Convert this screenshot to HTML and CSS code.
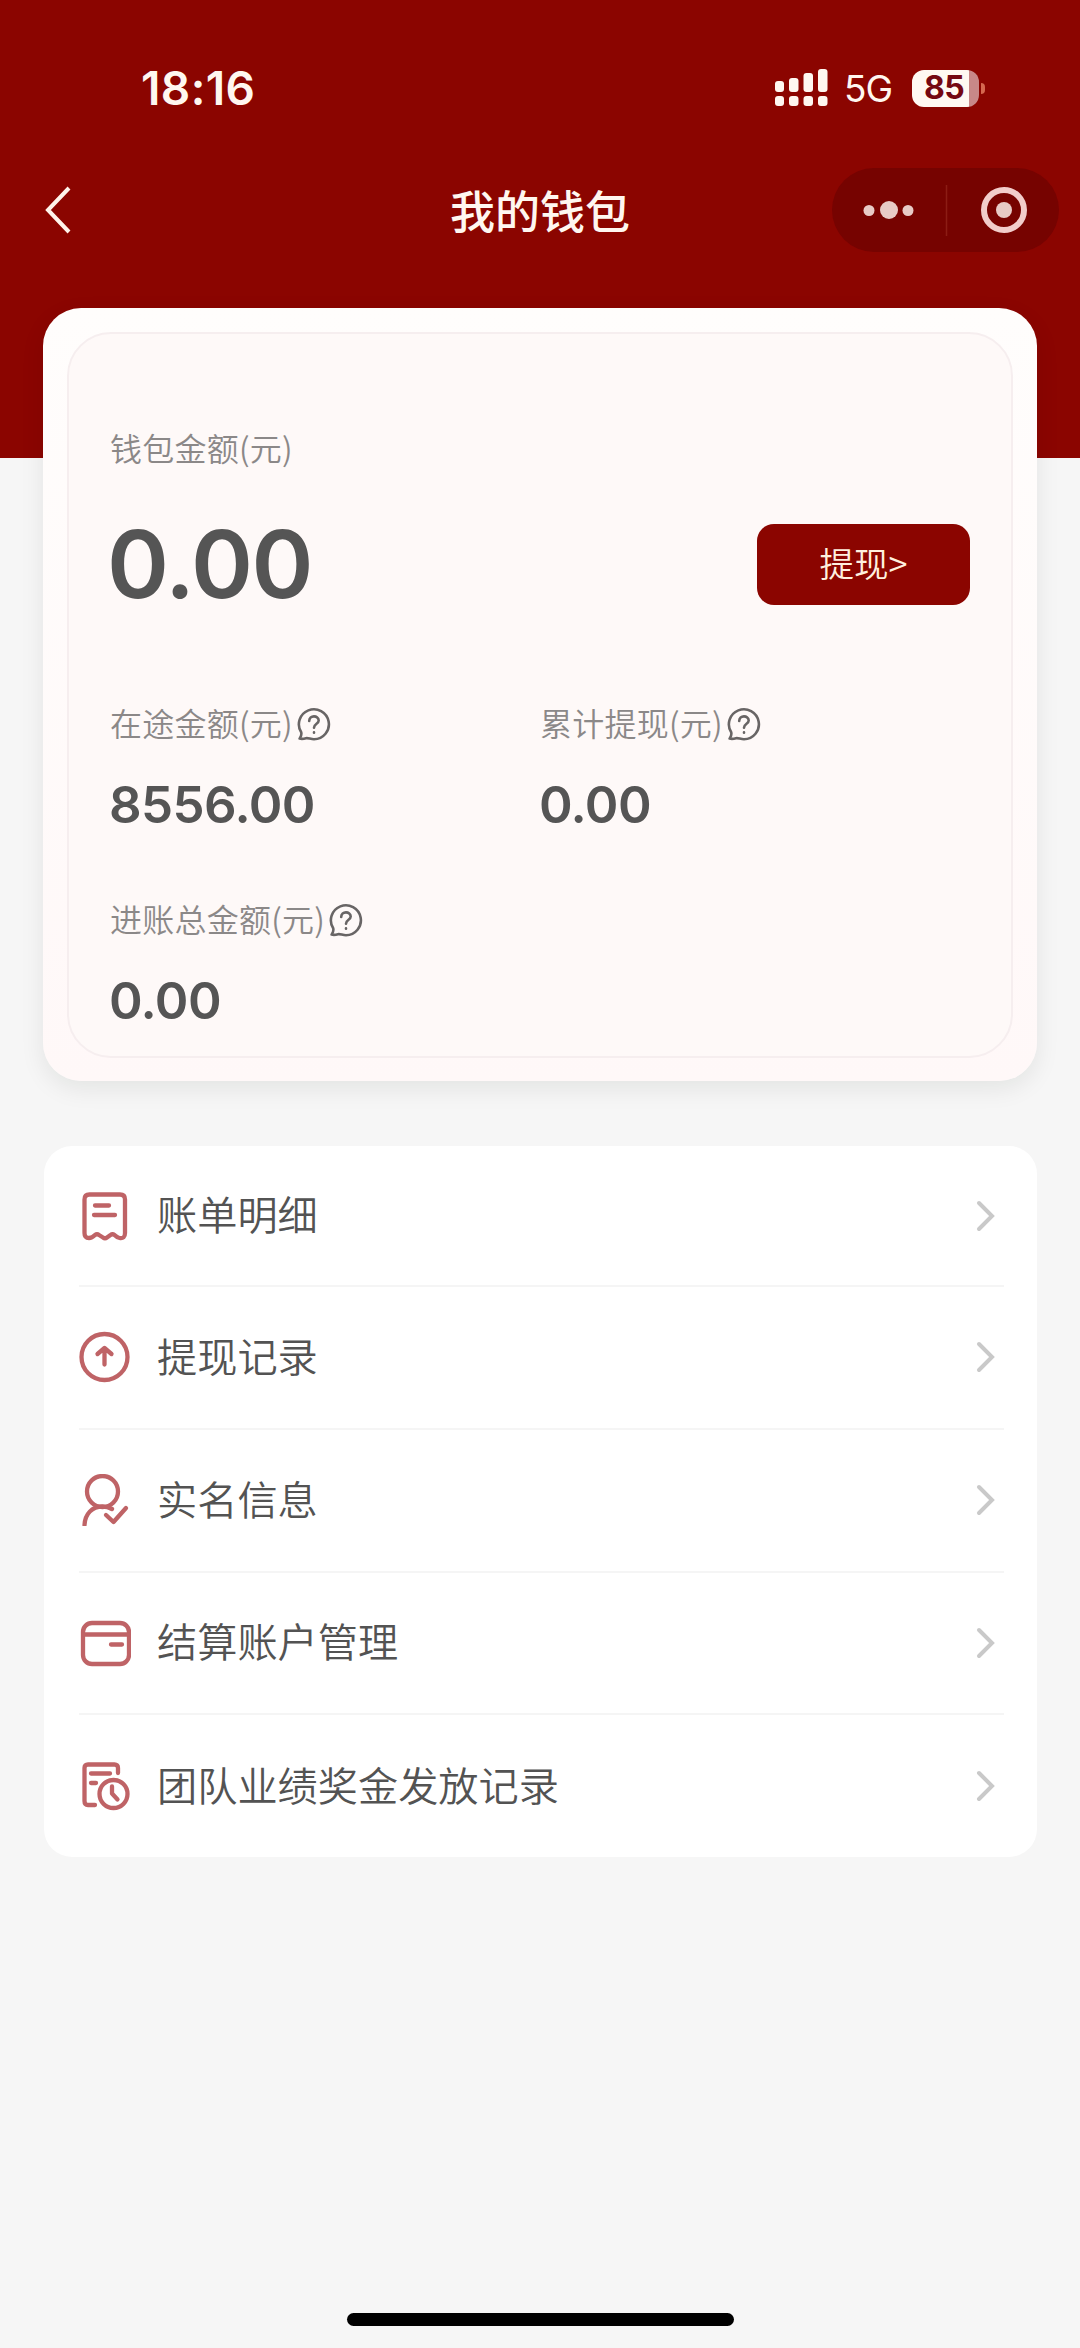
FILE: index.html
```html
<!DOCTYPE html>
<html lang="zh-CN">
<head>
<meta charset="utf-8">
<title>我的钱包</title>
<link rel="stylesheet" href="styles.css">
</head>
<body>
<svg class="defs" width="0" height="0">
  <symbol id="help" viewBox="0 0 34 34"><path d="M4.2 25.3A15 15 0 1 1 17 32.3C13.6 32.3 11 30.6 9 31.2C7 31.8 5 32.2 2.6 31.6C3.6 29.8 5 28 4.2 25.3Z"/><path d="M12.2 14C12.2 7.8 21.7 8 21.7 13.6C21.7 17 17 16.6 17 20.8M17 25.4V25.8"/></symbol>
  <symbol id="chevron" viewBox="0 0 20 32"><path d="M3 3L16 16L3 29"/></symbol>
</svg>
<div class="screen">
  <header class="header">
    <div class="status">
      <span class="time">18:16</span>
      <div class="indicators">
        <svg class="signal" width="53" height="38" viewBox="0 0 53 38"><rect x="0" y="12" width="9" height="11" rx="3"/><rect x="14" y="9" width="9.500" height="14" rx="3"/><rect x="28.500" y="4" width="9.500" height="19" rx="3"/><rect x="43" y="0" width="9.500" height="23" rx="3"/><rect x="0" y="27" width="9" height="10" rx="3"/><rect x="14" y="27" width="9.500" height="10" rx="3"/><rect x="28.500" y="27" width="9.500" height="10" rx="3"/><rect x="43" y="27" width="9.500" height="10" rx="3"/></svg>
        <span class="network">5G</span>
        <div class="battery"><span class="level">85</span></div>
        <i class="nub"></i>
      </div>
    </div>
    <nav class="nav">
      <svg class="back" width="30" height="48" viewBox="0 0 30 48"><path d="M26 2L5 24L26 46"/></svg>
      <h1 class="title">我的钱包</h1>
      <div class="capsule">
        <svg width="227" height="84" viewBox="0 0 227 84"><circle cx="37" cy="42.500" r="5.500"/><circle cx="57" cy="42" r="9"/><circle cx="76" cy="42.500" r="5.500"/><path class="split" d="M114.500 17V68"/><circle class="ring" cx="172" cy="42" r="20"/><circle cx="172" cy="42" r="8"/></svg>
      </div>
    </nav>
  </header>

  <main class="content">
    <section class="card">
      <div class="panel">
        <div class="label">钱包金额(元)</div>
        <div class="balance">
          <span class="amount">0.00</span>
          <button class="withdraw">提现&gt;</button>
        </div>
        <div class="stats">
          <div class="stat"><div class="label">在途金额(元)<svg class="help"><use href="#help"/></svg></div><div class="value">8556.00</div></div>
          <div class="stat"><div class="label">累计提现(元)<svg class="help"><use href="#help"/></svg></div><div class="value">0.00</div></div>
          <div class="stat"><div class="label">进账总金额(元)<svg class="help"><use href="#help"/></svg></div><div class="value">0.00</div></div>
        </div>
      </div>
    </section>

    <ul class="menu">
      <li class="item">
        <svg class="icon" viewBox="0 0 52 52"><path d="M5.500 9.500Q5.500 4.500 10.500 4.500H41Q46 4.500 46 9.500V43Q46 49 40.500 48Q38 47.500 35.500 45Q33.500 43.500 31.500 45L28 47.500Q26 49 24 47.500L20 45Q18 43.500 16 45Q13 48 10 48Q5.500 48 5.500 43Z"/><path d="M16 15.500H30M15 25H36"/></svg>
        <span class="name">账单明细</span><svg class="go"><use href="#chevron"/></svg>
      </li>
      <li class="item">
        <svg class="icon" viewBox="0 0 52 52"><circle cx="25.500" cy="26" r="23"/><path d="M25.500 33.500V18M18.500 23L25.500 17L32.500 23"/></svg>
        <span class="name">提现记录</span><svg class="go"><use href="#chevron"/></svg>
      </li>
      <li class="item">
        <svg class="icon" viewBox="0 0 52 52"><circle cx="23.500" cy="17.500" r="15.500"/><path d="M5.500 51C6 40 13 32.500 23.500 32.500Q28.500 32.500 33 35"/><path d="M27 41L34.500 48L47 34"/></svg>
        <span class="name">实名信息</span><svg class="go"><use href="#chevron"/></svg>
      </li>
      <li class="item">
        <svg class="icon" viewBox="0 0 52 52"><rect x="4" y="6" width="46" height="41" rx="9"/><path d="M5 17.500H49M32 27.500H43"/></svg>
        <span class="name">结算账户管理</span><svg class="go"><use href="#chevron"/></svg>
      </li>
      <li class="item">
        <svg class="icon" viewBox="0 0 52 52"><path d="M39 13V8Q39 4.500 35.500 4.500H9Q5.500 4.500 5.500 8V41Q5.500 45 9 45H16M12 13.500H31M12 23H17"/><circle cx="34.500" cy="34" r="14"/><path d="M33 26.500V33.500L38.500 39.500"/></svg>
        <span class="name">团队业绩奖金发放记录</span><svg class="go"><use href="#chevron"/></svg>
      </li>
    </ul>
  </main>
  <div class="home"></div>
</div>
</body>
</html>
```
FILE: styles.css
```css
* { box-sizing: border-box; }
body { margin: 0; background: #f6f6f6; font-family: Inter, "Noto Sans CJK SC", sans-serif; color: #555; }
svg { display: block; flex: none; }
.defs { position: absolute; }
.screen { height: 2348px; display: flex; flex-direction: column; overflow: hidden; }

.header { height: 458px; flex: none; background: #8b0500; padding-top: 58px; color: #fff7f0; }
.status { height: 60px; display: flex; align-items: center; justify-content: space-between; padding: 0 95px 0 141px; }
.time { font-size: 46px; font-weight: 600; letter-spacing: 0.4px; line-height: 58px; padding-bottom: 1px; }
.indicators { display: flex; align-items: center; }
.signal { fill: #fff7f0; }
.network { width: 84px; padding: 1px 0 0 16px; font-size: 37px; letter-spacing: -1px; white-space: nowrap; }
.battery { width: 67px; height: 37px; border-radius: 12px; background: linear-gradient(90deg, #fff9f2 57px, #c88888 57px); display: flex; align-items: center; padding-left: 12px; }
.level { color: #750812; font-size: 32px; font-weight: 700; line-height: 36px; padding-bottom: 1px; letter-spacing: -0.5px; }
.nub { width: 4px; height: 11px; margin-left: 2px; border-radius: 0 4px 4px 0; background: #d5684f; }
.nav { height: 84px; margin-top: 50px; padding: 0 21px 0 43px; display: grid; grid-template-columns: 227px 1fr 227px; align-items: center; }
.back { fill: none; stroke: #fff3ea; stroke-width: 4; }
.title { margin: 0 0 0 22px; padding-right: 44px; text-align: center; font-size: 45px; font-weight: 500; line-height: 60px; font-family: "Noto Sans CJK SC", sans-serif; }
.capsule { height: 84px; border-radius: 42px; background: #760300; }
.capsule svg { fill: #e8cbc6; }
.capsule .split { stroke: #8c1c14; stroke-width: 1.5; }
.capsule .ring { fill: none; stroke: #f2cdca; stroke-width: 6; }

.content { padding: 0 43px; margin-top: -150px; }
.card { height: 773px; padding: 24px; border-radius: 38px; background: linear-gradient(#fffdfc, #fff8f8); box-shadow: 0 8px 24px rgba(0, 20, 10, 0.08); }
.panel { height: 726px; border: 2px solid #f6eeef; border-radius: 44px; background: #fef9f8; padding: 89px 41px 0; }
.label { display: flex; align-items: center; height: 48px; font-family: "Noto Sans CJK SC", sans-serif; font-weight: 350; font-size: 32px; letter-spacing: 0.25px; color: #8b8888; white-space: nowrap; }
.help { width: 34px; height: 34px; margin: 3px 0 0 4px; fill: none; stroke: #686565; stroke-width: 2.6; stroke-linecap: round; stroke-linejoin: round; }
.balance { height: 82px; margin-top: 52px; display: flex; align-items: center; justify-content: space-between; }
.amount { margin-left: -3px; font-size: 94px; font-weight: 600; line-height: 82px; letter-spacing: -1.4px; }
.withdraw { width: 213px; height: 81px; padding: 0 0 4px; border: 0; border-radius: 17px; background: #8b0500; color: #fff0df; font-family: "Noto Sans CJK SC", sans-serif; font-size: 34.500px; font-weight: 350; }
.stats { margin-top: 93px; display: grid; grid-template-columns: 430px 1fr; row-gap: 50px; }
.stat { height: 146px; }
.value { margin: 29px 0 0 -1px; font-size: 51px; font-weight: 600; line-height: 60px; letter-spacing: -0.6px; }

.menu { list-style: none; margin: 65px 0 0 1px; padding: 0 33px 0 35px; background: #fff; border-radius: 28px; }
.item { height: 142.750px; display: flex; align-items: center; border-bottom: 2px solid #f5f5f5; }
.item:first-child { height: 141px; }
.item:last-child { height: 142px; border-bottom: 0; }
.icon { width: 52px; height: 52px; fill: none; stroke: #bf6366; stroke-width: 4.3; stroke-linecap: round; stroke-linejoin: round; }
.name { flex: 1; margin-left: 26px; padding-bottom: 5px; font-family: "Noto Sans CJK SC", sans-serif; font-size: 40.200px; line-height: 60px; font-weight: 350; color: #535353; }
.go { width: 20px; height: 32px; margin-right: 8px; fill: none; stroke: #c9c9c9; stroke-width: 4; stroke-linecap: round; }

.home { width: 387px; height: 13px; margin: auto auto 22px; border-radius: 7px; background: #000; }
```
